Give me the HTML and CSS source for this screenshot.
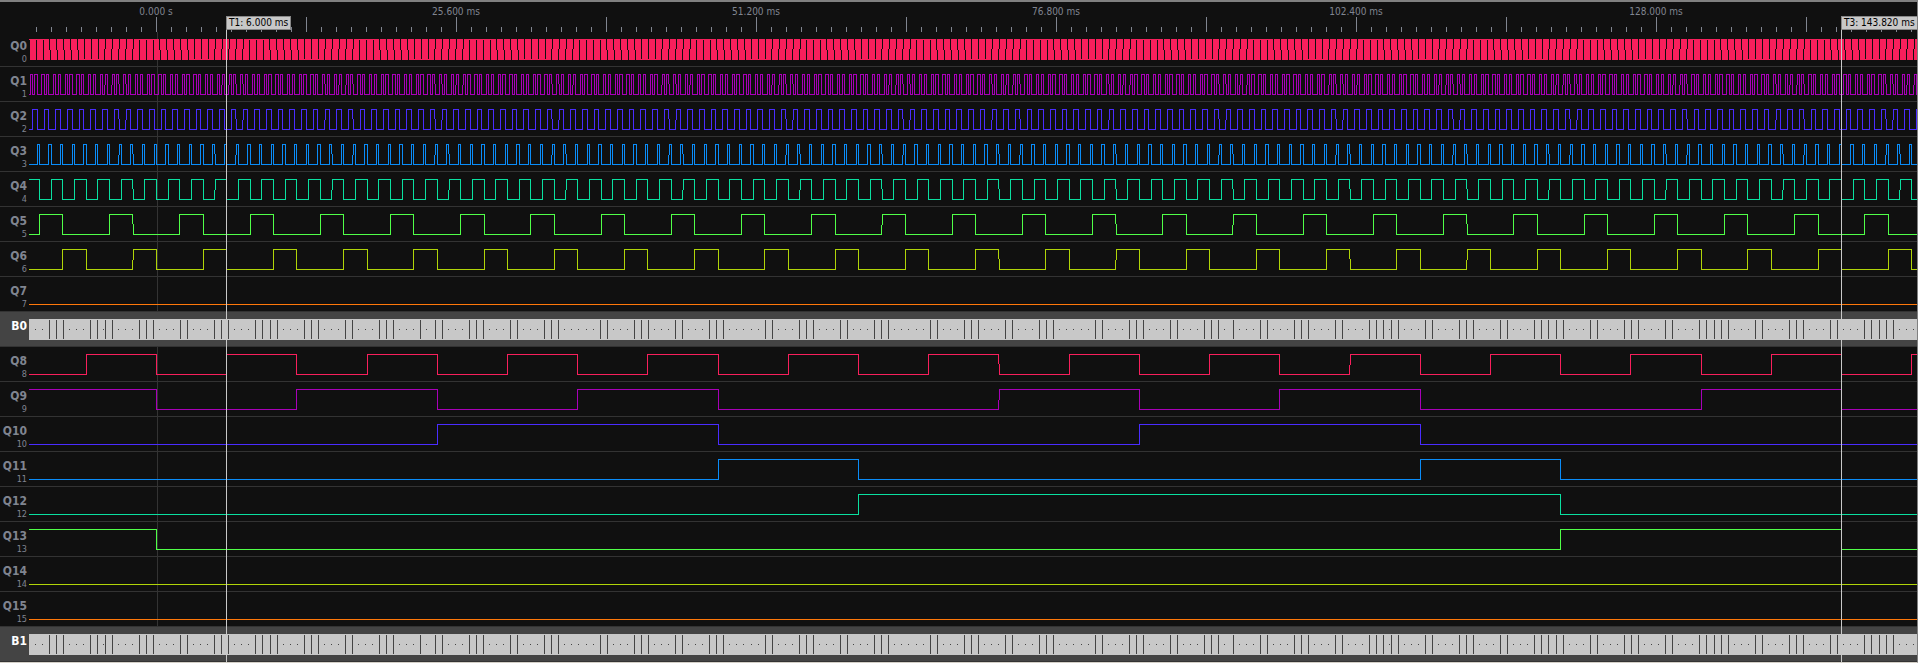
FILE: index.html
```html
<!DOCTYPE html>
<html lang="en">
<head>
<meta charset="utf-8">
<title>Logic analyzer capture</title>
<link rel="stylesheet" href="styles.css">
</head>
<body>
<main class="analyzer">
  <header class="ruler" id="ruler"></header>
  <section class="channels" id="channels">
    <div class="trigger"></div>
  </section>
  <div class="cursor cursor-t1"><span class="flag">T1: 6.000 ms</span></div>
  <div class="cursor cursor-t3"><span class="flag">T3: 143.820 ms</span></div>
</main>
<script src="app.js"></script>
</body>
</html>
```
FILE: styles.css
```css
* {
  box-sizing: border-box;
}

body {
  margin: 0;
  background: #101010;
  font-family: "DejaVu Sans Condensed", "DejaVu Sans", sans-serif;
}

.analyzer {
  position: relative;
  overflow: hidden;
  border-top: 2px solid #808080;
  border-right: 1px solid #808080;
  border-bottom: 1px solid #d4d0c8;
  background: #101010;
}

.ruler {
  position: relative;
  height: 30px;
  color: #808590;
}

.ruler svg {
  display: block;
  width: 100%;
  height: 30px;
}

.time {
  position: absolute;
  top: 4px;
  transform: translateX(-50%);
  font-size: 10px;
  line-height: 12px;
  white-space: nowrap;
}

.channels {
  position: relative;
}

.channel {
  display: grid;
  grid-template-columns: 29px 1fr;
  height: 35px;
  border-bottom: 1px solid #333333;
}

.label {
  display: flex;
  flex-direction: column;
  align-items: flex-end;
  padding: 7px 2px 0 0;
  color: #808590;
}

.name {
  font-size: 12px;
  font-weight: bold;
  line-height: 14px;
}

.index {
  font-size: 9px;
  line-height: 12px;
}

.plot {
  position: relative;
  display: block;
  width: 100%;
  height: 34px;
  overflow: hidden;
}

.bus {
  position: relative;
  background: #444444;
}

.bus .label {
  color: #ffffff;
}

.band {
  fill: #c8c8c8;
}

.marks {
  fill: #444444;
}

.ticks {
  fill: #808590;
}

.trigger {
  position: absolute;
  top: 0;
  bottom: 0;
  left: 157px;
  width: 1px;
  background: #333333;
}

.cursor {
  position: absolute;
  top: 14px;
  bottom: 0;
  width: 1px;
  background: #c8c8c8;
}

.cursor-t1 {
  left: 226px;
}

.cursor-t3 {
  left: 1841px;
}

.flag {
  position: absolute;
  top: 0;
  left: 0;
  padding: 0 2px;
  border: 1px solid #888888;
  background: #c8c8c8;
  color: #000000;
  font-size: 10px;
  line-height: 12px;
  white-space: nowrap;
}

.c0 { fill: #f81f5c; }
.c1 { fill: #a800b8; }
.c2 { fill: #4a2cff; }
.c3 { fill: #0a8cf8; }
.c4 { fill: #0ae0a0; }
.c5 { fill: #50ff48; }
.c6 { fill: #b0d408; }
.c7 { fill: #ff780a; }
```
FILE: app.js
```js
const GUTTER = 29;
const ORIGIN = 156.5;           // x of t = 0
const STEP = 1.17017;           // pixels per clock count
const RISE = 0.1;               // pixels taken by a level change
const TOP = 7;
const FIRST = -112;
const LAST = 3400;

const mod = (a, b) => ((a % b) + b) % b;

// Counter outputs: seconds on Q0-Q7, hours on Q8-Q15, both in BCD.
function level(channel, count) {
  const value = channel < 8 ? mod(count, 60) : mod(Math.floor(count / 60), 24);
  const bcd = Math.floor(value / 10) * 16 + value % 10;
  return (bcd >> (channel % 8)) & 1;
}

const box = (x, y, w, h) => `M${x} ${y}h${w}v${h}h${-w}z`;

function wave(channel) {
  let d = '';
  let start = 0;
  let state = level(channel, FIRST);
  for (let k = FIRST + 1; k <= LAST; k++) {
    const next = level(channel, k);
    if (next === state && k < LAST) continue;
    const x = ORIGIN + STEP * k;
    const a = Math.floor(x - RISE) - GUTTER;
    const b = Math.floor(x) - GUTTER;
    if (a >= start) d += box(start, state ? TOP : TOP + 20, a - start + 1, 1);
    if (next !== state) {
      if (a === b) d += box(a, TOP, 1, 21);
      else if (state) d += box(a, TOP, 1, 10) + box(b, TOP + 10, 1, 11);
      else d += box(a, TOP + 11, 1, 10) + box(b, TOP, 1, 11);
    }
    state = next;
    start = Math.max(b, 0);
  }
  return `<path class="c${channel % 8}" d="${d}"/>`;
}

const edges = [49, 56, 63, 90, 97, 105, 112, 139, 146, 153, 180, 187, 214, 221, 228,
  255, 262, 270, 277, 304, 311, 318, 345, 352, 379, 386, 393, 420, 435, 442, 469, 476,
  483, 510, 517, 544, 551, 558, 600, 607, 634, 641, 648, 675, 682, 709, 716, 723, 765,
  772, 799, 806, 813, 840, 847, 874, 881, 888, 930, 937, 964, 971, 978, 1005, 1012, 1039,
  1046, 1053, 1095, 1102, 1129, 1136, 1143, 1170, 1177, 1204, 1211, 1218, 1233, 1260,
  1267, 1294, 1301, 1308, 1335, 1342, 1369, 1376, 1383, 1391, 1398, 1425, 1432, 1459,
  1466, 1473, 1500, 1507, 1534, 1541, 1548, 1556, 1563, 1590, 1597, 1624, 1631, 1638,
  1665, 1672, 1699, 1706, 1714, 1721, 1728, 1755, 1762, 1789, 1796, 1803, 1830, 1837,
  1864, 1871, 1879, 1886, 1893];

function bus() {
  let d = box(35 - GUTTER, 17, 1, 1) + box(42 - GUTTER, 17, 1, 1) +
    box(103 - GUTTER, 17, 1, 1) + box(1389 - GUTTER, 17, 1, 1);
  edges.forEach((x, i) => {
    d += box(x - GUTTER, 8, 1, 19);
    const end = edges[i + 1] || x + 25;
    for (let j = 0; x + 6 + 7 * j < end - 4; j++) {
      d += box(x + 6 + 7 * j + (j > 2 ? 1 : 0) - GUTTER, 17, 1, 1);
    }
  });
  return `<rect class="band" x="0" y="7" width="100%" height="21"/><path class="marks" d="${d}"/>`;
}

function addRow(name, index, art, extra) {
  const row = document.createElement('div');
  row.className = 'channel' + extra;
  row.innerHTML = `<div class="label"><span class="name">${name}</span>` +
    `<span class="index">${index}</span></div>` +
    `<svg class="plot" shape-rendering="crispEdges" aria-hidden="true">${art}</svg>`;
  document.getElementById('channels').append(row);
}

for (let i = 0; i < 16; i++) {
  addRow('Q' + i, i, wave(i), '');
  if (i % 8 === 7) addRow('B' + (i >> 3), '', bus(), ' bus');
}

const ruler = document.getElementById('ruler');
let ticks = '';
for (let i = -8; i <= 240; i++) {
  ticks += i % 10 ? box(156 + 15 * i, 25, 1, 5) : box(156 + 15 * i, 15, 1, 15);
}
ruler.innerHTML = `<svg shape-rendering="crispEdges" aria-hidden="true"><path class="ticks" d="${ticks}"/></svg>`;
for (let i = 0; 156 + 300 * i < ruler.clientWidth; i++) {
  const time = document.createElement('span');
  time.className = 'time';
  time.style.left = 156 + 300 * i + 'px';
  time.textContent = i ? (25.6 * i).toFixed(3) + ' ms' : '0.000 s';
  ruler.append(time);
}
```
